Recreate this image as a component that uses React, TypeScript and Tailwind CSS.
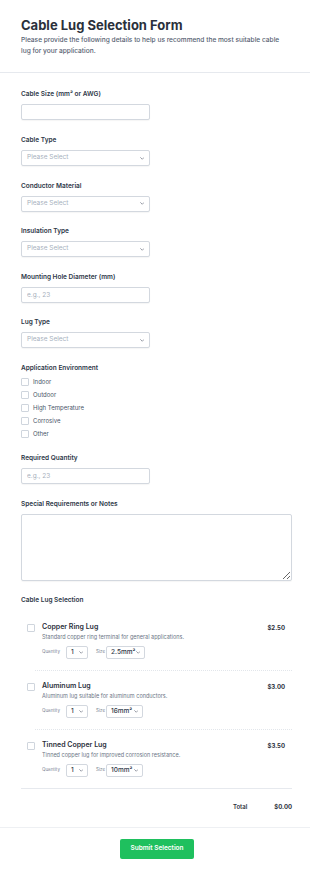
import type { ReactNode } from "react";

const environments = ["Indoor", "Outdoor", "High Temperature", "Corrosive", "Other"];

const lugs = [
  {
    name: "Copper Ring Lug",
    desc: "Standard copper ring terminal for general applications.",
    price: "$2.50",
    size: "2.5mm²",
    sizeWidth: "w-[39px]",
  },
  {
    name: "Aluminum Lug",
    desc: "Aluminum lug suitable for aluminum conductors.",
    price: "$3.00",
    size: "16mm²",
    sizeWidth: "w-[37px]",
  },
  {
    name: "Tinned Copper Lug",
    desc: "Tinned copper lug for improved corrosion resistance.",
    price: "$3.50",
    size: "10mm²",
    sizeWidth: "w-[37px]",
  },
];

function Chevron({ className = "" }: { className?: string }) {
  return (
    <svg viewBox="0 0 6 4" className={`h-[3px] w-[4.5px] shrink-0 ${className}`} fill="none">
      <path d="M0.8 0.8 L3 3 L5.2 0.8" stroke="#6b7280" strokeWidth="0.9" strokeLinecap="round" strokeLinejoin="round" />
    </svg>
  );
}

function Label({ children, className = "" }: { children: ReactNode; className?: string }) {
  return (
    <p className={`h-[10px] text-[6.5px] font-semibold leading-[10px] text-[#2d3748] ${className}`}>
      {children}
    </p>
  );
}

function TextInput({ placeholder }: { placeholder?: string }) {
  return (
    <input
      placeholder={placeholder}
      className="mt-[5px] block h-[16px] w-[129px] rounded-[2px] border border-[#d3d8df] bg-white px-[5px] text-[6.5px] text-[#2d3748] shadow-[0_1px_1px_rgba(0,0,0,0.04)] outline-none placeholder:text-[#a7b0bd]"
    />
  );
}

function SelectBox() {
  return (
    <div className="mt-[5px] flex h-[16px] w-[129px] items-center justify-between rounded-[2px] border border-[#d3d8df] bg-white pl-[5px] pr-[5px] shadow-[0_1px_1px_rgba(0,0,0,0.04)]">
      <span className="text-[6.5px] text-[#a7b0bd]">Please Select</span>
      <Chevron />
    </div>
  );
}

function MiniSelect({ value, width }: { value: string; width: string }) {
  return (
    <div
      className={`flex h-[13px] ${width} items-center justify-between rounded-[2px] border border-[#d3d8df] bg-white pl-[4px] pr-[4px]`}
    >
      <span className="text-[6.5px] font-medium leading-none text-[#2d3748]">{value}</span>
      <Chevron />
    </div>
  );
}

function Box() {
  return <span className="block h-[8px] w-[8px] shrink-0 rounded-[1px] border border-[#cfd5dd] bg-white" />;
}

export default function App() {
  return (
    <div className="min-h-[881px] w-[310px] bg-white font-['Inter','Liberation_Sans',sans-serif] text-[#2d3748]">
      <header className="border-b border-[#e6e9ee] px-[21px] pb-[15px] pt-[16px]">
        <h1 className="text-[13px] font-bold leading-[19px] text-[#2b303b]">
          Cable Lug Selection Form
        </h1>
        <p className="text-[6.6px] font-medium leading-[11px] text-[#566172]">
          Please provide the following details to help us recommend the most suitable cable lug for your application.
        </p>
      </header>

      <form className="px-[21px] pt-[16px]">
        <Label>Cable Size (mm² or AWG)</Label>
        <TextInput />

        <Label className="mt-[15px]">Cable Type</Label>
        <SelectBox />

        <Label className="mt-[14.5px]">Conductor Material</Label>
        <SelectBox />

        <Label className="mt-[14.5px]">Insulation Type</Label>
        <SelectBox />

        <Label className="mt-[14.5px]">Mounting Hole Diameter (mm)</Label>
        <TextInput placeholder="e.g., 23" />

        <Label className="mt-[14.5px]">Lug Type</Label>
        <SelectBox />

        <Label className="mt-[14.5px]">Application Environment</Label>
        <div className="mt-[2.5px] flex flex-col">
          {environments.map((env) => (
            <label key={env} className="flex h-[13px] items-center gap-[4px]">
              <Box />
              <span className="text-[6px] text-[#4a5568]">{env}</span>
            </label>
          ))}
        </div>

        <Label className="mt-[12.5px]">Required Quantity</Label>
        <TextInput placeholder="e.g., 23" />

        <Label className="mt-[15px]">Special Requirements or Notes</Label>
        <textarea className="mt-[5px] block h-[67px] w-[271px] rounded-[2px] border border-[#d3d8df] bg-white text-[6.5px] shadow-[0_1px_1px_rgba(0,0,0,0.04)] outline-none" />

        <Label className="mt-[14px]">Cable Lug Selection</Label>
        <div className="mt-[7px] w-[271px]">
          {lugs.map((lug, i) => (
            <div key={lug.name}>
              <div className="flex items-start gap-[7px] py-[11px] pl-[6px] pr-[7px]">
                <span className="mt-[1px]">
                  <Box />
                </span>
                <div className="flex-1">
                  <div className="flex h-[10px] items-center justify-between">
                    <span className="text-[7px] font-semibold text-[#2b303b]">{lug.name}</span>
                    <span className="text-[6px] font-bold text-[#2b303b]">{lug.price}</span>
                  </div>
                  <p className="h-[8px] text-[5.5px] leading-[8px] text-[#6b7585]">{lug.desc}</p>
                  <div className="mt-[5px] flex items-center">
                    <span className="w-[24px] text-[4.5px] text-[#7b8494]">Quantity</span>
                    <MiniSelect value="1" width="w-[22px]" />
                    <span className="ml-[8px] w-[10px] text-[4.5px] text-[#7b8494]">Size</span>
                    <MiniSelect value={lug.size} width={lug.sizeWidth} />
                  </div>
                </div>
              </div>
              {i < lugs.length - 1 && <div className="ml-[14px] border-t border-dotted border-[#e2e6eb]" />}
            </div>
          ))}
          <div className="border-t border-[#e6e9ee]" />
          <div className="flex h-[38px] items-center justify-end pb-[2px]">
            <span className="text-[6px] font-semibold text-[#2b303b]">Total</span>
            <span className="ml-[27px] text-[6px] font-bold text-[#2b303b]">$0.00</span>
          </div>
        </div>
      </form>

      <div className="border-t border-[#eef0f3] pb-[17px] pt-[11px]">
        <button
          type="button"
          className="ml-[120px] block h-[20px] w-[74px] rounded-[2px] bg-[#1fc05e] text-[6.5px] font-semibold text-white"
        >
          Submit Selection
        </button>
      </div>
    </div>
  );
}
